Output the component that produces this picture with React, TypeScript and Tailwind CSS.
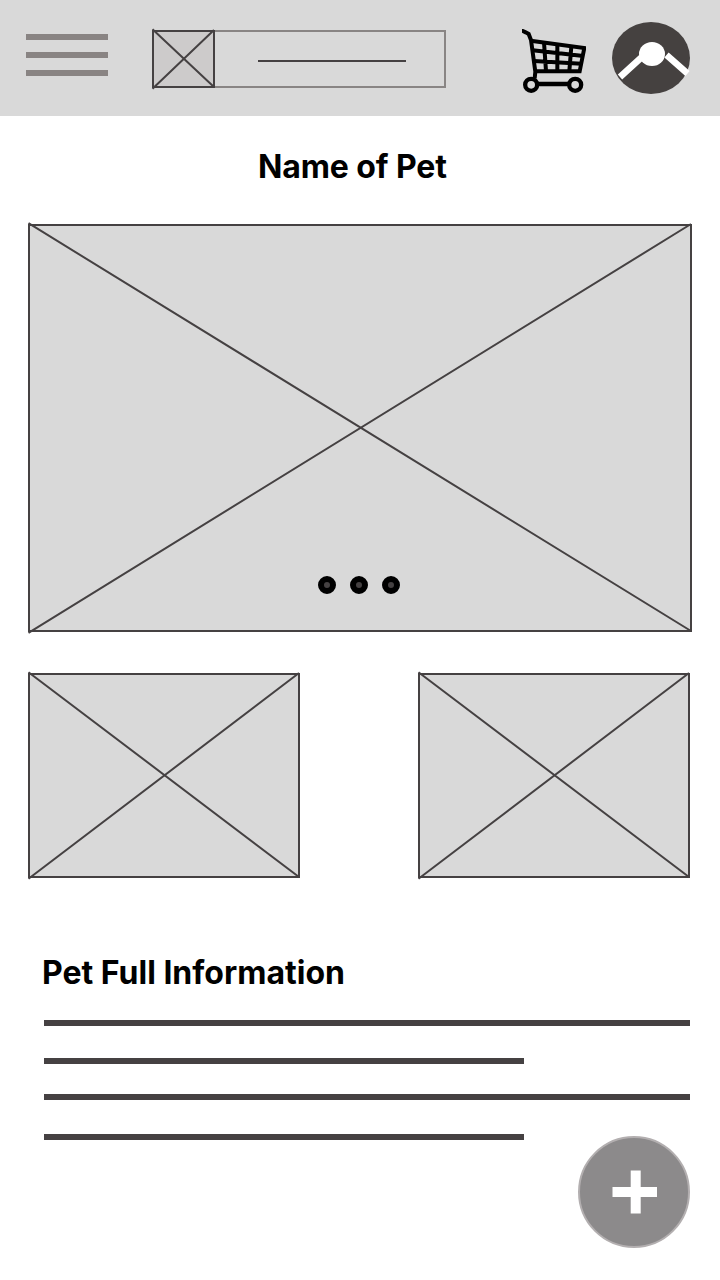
type PlaceholderProps = { width: number; height: number; className: string };

function Placeholder({ width, height, className }: PlaceholderProps) {
  return (
    <svg
      className={`block shrink-0 overflow-visible ${className}`}
      viewBox={`0 0 ${width} ${height}`}
      stroke="#454142"
      strokeWidth="2"
      role="img"
      aria-label="Image"
    >
      <rect x="1" y="1" width={width - 2} height={height - 2} fill="currentColor" />
      <path d={`M0.5 -0.8L${width - 1} ${height - 1}M0.5 ${height + 0.8}L${width - 1} 0`} />
    </svg>
  );
}

function CartIcon() {
  return (
    <svg className="block size-16 shrink-0" viewBox="36 42 192 192" fill="none" stroke="#000">
      <path d="M34 46L47 52L56 57L63 75L76 170L74 190" strokeWidth="12" />
      <path d="M62 77L223 99L209 169H76" strokeWidth="12" />
      <path d="M68 106L220 123M72 138L214 146M102 82L108 168M142 88V168M184 94L178 168" strokeWidth="12" />
      <path d="M80 207H180" strokeWidth="13" />
      <circle cx="63.5" cy="209.5" r="18" strokeWidth="13" />
      <circle cx="195.5" cy="209.5" r="18" strokeWidth="13" />
    </svg>
  );
}

function ProfileIcon() {
  return (
    <svg className="ml-[26px] block h-[72px] w-[78px] shrink-0" viewBox="0 0 78 72">
      <ellipse cx="39" cy="36" rx="39" ry="36" fill="#454140" />
      <path d="M8 55L31 34M54.5 33L75.5 51.5" stroke="#fff" strokeWidth="6.5" />
      <ellipse cx="40" cy="32" rx="13" ry="12" fill="#fff" />
    </svg>
  );
}

export default function App() {
  return (
    <div className="flex h-[1280px] w-[720px] flex-col overflow-hidden bg-white font-['Inter',sans-serif] text-black">
      <header className="flex h-[116px] shrink-0 items-start bg-[#d9d9d9] pl-[26px]">
        <button className="mt-[34px] flex w-[82px] shrink-0 flex-col gap-3" aria-label="Menu">
          <span className="h-1.5 w-full bg-[#898483]" />
          <span className="h-1.5 w-full bg-[#898483]" />
          <span className="h-1.5 w-full bg-[#898483]" />
        </button>
        <div className="mt-[30px] ml-11 flex h-[58px] w-[294px] shrink-0">
          <Placeholder width={63} height={58} className="h-[58px] w-[63px] text-[#cdcbcb]" />
          <div className="flex flex-1 items-center border-y-2 border-r-2 border-[#898584] pl-[43px]">
            <span className="mt-1 h-0.5 w-[148px] bg-[#454142]" />
          </div>
        </div>
        <div className="mt-[29px] ml-[76px]">
          <CartIcon />
        </div>
        <div className="mt-[22px]">
          <ProfileIcon />
        </div>
      </header>

      <main className="flex flex-col pt-[31px]">
        <h1 className="ml-[258px] text-[32px] leading-[39px] font-bold tracking-[-0.1px] whitespace-nowrap">Name of Pet</h1>

        <div className="mt-[38px] ml-7 grid h-[408px] w-[664px]">
          <Placeholder width={664} height={408} className="col-start-1 row-start-1 h-[408px] w-[664px] text-[#d9d9d9]" />
          <div className="z-10 col-start-1 row-start-1 mb-[38px] ml-[290px] flex gap-3.5 self-end">
            {[0, 1, 2].map((dot) => (
              <span key={dot} className="size-[18px] rounded-full border-6 border-black bg-[#454142]" />
            ))}
          </div>
        </div>

        <div className="mt-[41px] flex justify-between pr-[30px] pl-7">
          <Placeholder width={272} height={205} className="h-[205px] w-[272px] text-[#d9d9d9]" />
          <Placeholder width={272} height={205} className="h-[205px] w-[272px] text-[#d9d9d9]" />
        </div>

        <section className="mt-[75px] pr-[30px] pl-11">
          <h2 className="-ml-0.5 text-[32px] leading-[39px] font-bold whitespace-nowrap">Pet Full Information</h2>
          <div className="mt-7 h-1.5 bg-[#454142]" />
          <div className="mt-8 h-1.5 w-[480px] bg-[#454142]" />
          <div className="mt-[30px] h-1.5 bg-[#454142]" />
          <div className="mt-[34px] h-1.5 w-[480px] bg-[#454142]" />
        </section>
      </main>

      <button
        className="-mt-1 mr-[30px] flex size-28 shrink-0 items-center justify-center self-end rounded-full border-2 border-[#b3afb0] bg-[#8c8a8b]"
        aria-label="Add"
      >
        <svg className="block h-[44px] w-[45px]" viewBox="0 0 45 44" fill="#fff">
          <path d="M18.7 0.5H28.7V17H45V27H28.7V43.5H18.7V27H0.5V17H18.7Z" />
        </svg>
      </button>
    </div>
  );
}
